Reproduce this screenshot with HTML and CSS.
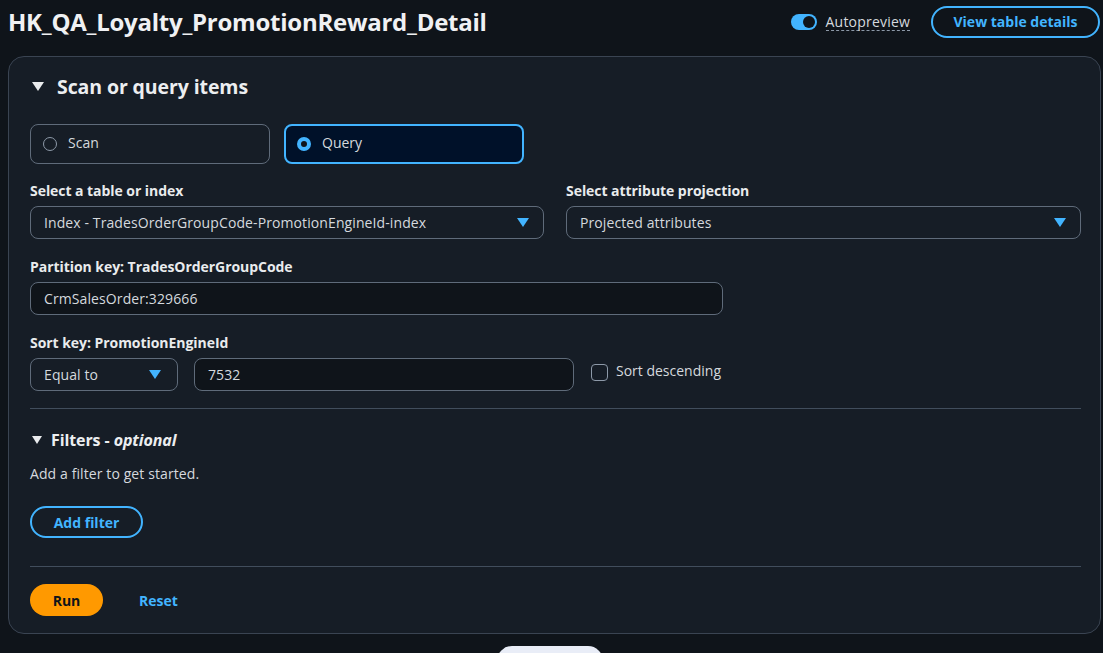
FILE: index.html
```html
<!DOCTYPE html>
<html lang="en">
<head>
<meta charset="utf-8">
<title>HK_QA_Loyalty_PromotionReward_Detail</title>
<link rel="stylesheet" href="styles.css">
</head>
<body>
<header class="topbar">
  <h1 class="title">HK_QA_Loyalty_PromotionReward_Detail</h1>
  <div class="actions">
    <label class="toggle">
      <span class="track"><span class="knob"></span></span>
      <span class="toggle-label">Autopreview</span>
    </label>
    <button class="btn-outline btn-view">View table details</button>
  </div>
</header>

<section class="panel">
  <div class="panel-head">
    <span class="caret"></span>
    <h2 class="panel-title">Scan or query items</h2>
  </div>

  <div class="tiles">
    <div class="tile">
      <span class="radio"></span><span class="tile-text">Scan</span>
    </div>
    <div class="tile tile-active">
      <span class="radio radio-on"></span><span class="tile-text">Query</span>
    </div>
  </div>

  <div class="two-col">
    <div class="field">
      <div class="label">Select a table or index</div>
      <div class="select"><span>Index - TradesOrderGroupCode-PromotionEngineId-index</span><span class="arrow"></span></div>
    </div>
    <div class="field">
      <div class="label">Select attribute projection</div>
      <div class="select"><span>Projected attributes</span><span class="arrow"></span></div>
    </div>
  </div>

  <div class="field field-pk">
    <div class="label">Partition key: TradesOrderGroupCode</div>
    <div class="input input-pk">CrmSalesOrder:329666</div>
  </div>

  <div class="field field-sk">
    <div class="label">Sort key: PromotionEngineId</div>
    <div class="sk-row">
      <div class="select select-op"><span>Equal to</span><span class="arrow"></span></div>
      <div class="input input-sk">7532</div>
      <label class="check"><span class="box"></span><span>Sort descending</span></label>
    </div>
  </div>

  <hr class="divider divider-1">

  <div class="filters-head">
    <span class="caret caret-sm"></span>
    <h3 class="filters-title">Filters - <em>optional</em></h3>
  </div>
  <p class="hint">Add a filter to get started.</p>
  <button class="btn-outline btn-filter">Add filter</button>

  <hr class="divider divider-2">

  <div class="footer-row">
    <button class="btn-run">Run</button>
    <button class="btn-link">Reset</button>
  </div>
</section>

<div class="floating-pill"></div>
</body>
</html>
```

FILE: styles.css
```css
* { box-sizing: border-box; }
html, body { margin: 0; padding: 0; }
body {
  background: #0f141a;
  color: #d5d9de;
  font-family: "Open Sans", "Noto Sans", Arial, sans-serif;
  font-size: 14px;
  width: 1103px;
  height: 653px;
  overflow: hidden;
  position: relative;
}
button { font-family: inherit; cursor: pointer; }

.topbar {
  display: flex;
  align-items: center;
  justify-content: space-between;
  height: 43px;
  padding: 0 3px 0 8px;
}
.title {
  margin: 0;
  font-size: 24px;
  font-weight: 700;
  color: #f0f1f3;
  letter-spacing: -0.25px;
}
.actions { display: flex; align-items: center; gap: 21px; }
.toggle { display: flex; align-items: center; gap: 9px; }
.track {
  width: 26px; height: 16px; border-radius: 8px;
  background: #42b4ff; position: relative; display: inline-block;
}
.knob {
  position: absolute; right: 2px; top: 2px;
  width: 12px; height: 12px; border-radius: 50%; background: #0f141a;
}
.toggle-label {
  color: #d5d9de;
  border-bottom: 1px dashed #8d99a8;
  line-height: 17px;
  letter-spacing: 0.2px;
}
.btn-outline {
  background: transparent;
  border: 2px solid #42b4ff;
  color: #42b4ff;
  font-weight: 700;
  font-size: 14px;
  border-radius: 16px;
}
.btn-view { width: 169px; height: 32px; padding: 0; }

.panel {
  margin: 13px 0 0 8px;
  width: 1093px;
  height: 578px;
  background: #161d26;
  border: 1px solid #3a4452;
  border-radius: 16px;
  padding: 0 20px 0 21px;
}
.panel-head { display: flex; align-items: center; height: 58px; }
.caret {
  width: 0; height: 0;
  border-left: 6px solid transparent;
  border-right: 6px solid transparent;
  border-top: 9px solid #e9ebed;
  margin: 0 13px 0 2px;
}
.caret-sm {
  border-left-width: 5.5px; border-right-width: 5.5px; border-top-width: 8px;
  margin-right: 9px;
}
.panel-title { margin: 0; font-size: 19.5px; font-weight: 700; color: #eceef0; letter-spacing: -0.1px; }

.tiles { display: flex; gap: 14px; margin-top: 9px; }
.tile {
  width: 240px; height: 40px;
  border: 1px solid #5f6b7a;
  border-radius: 8px;
  display: flex; align-items: center;
  padding-left: 12px;
  padding-bottom: 3px;
  gap: 11px;
}
.tile-active {
  border: 2px solid #42b4ff;
  background: #001129;
  padding-left: 11px;
}
.radio {
  width: 14px; height: 14px; border-radius: 50%;
  border: 1px solid #8d99a8;
  margin-top: 3px;
}
.radio-on { border: 4px solid #42b4ff; background: #0f141a; }
.tile-text { color: #d5d9de; font-size: 14px; }

.two-col { display: grid; grid-template-columns: 514px 515px; gap: 22px; margin-top: 17px; }
.field { display: flex; flex-direction: column; }
.label {
  font-weight: 700; font-size: 14px; color: #e9ebed;
  height: 20px; line-height: 20px; margin-bottom: 5px; letter-spacing: -0.05px;
}
.select, .input {
  height: 33px;
  border: 1px solid #5f6b7a;
  border-radius: 8px;
  background: #0f141a;
  display: flex; align-items: center;
  padding: 0 14px 0 13px;
  color: #d5d9de;
  font-size: 14px;
  letter-spacing: 0.1px;
  justify-content: space-between;
}
.select { background: transparent; }
.input { background: #0f141a; justify-content: flex-start; }
.arrow {
  width: 0; height: 0;
  border-left: 6px solid transparent;
  border-right: 6px solid transparent;
  border-top: 9px solid #42b4ff;
}
.field-pk { margin-top: 18px; }
.input-pk { width: 693px; }
.field-sk { margin-top: 18px; }
.sk-row { display: flex; align-items: center; gap: 16px; }
.select-op { width: 148px; padding-right: 16px; }
.input-sk { width: 380px; }
.check { display: flex; align-items: center; gap: 8px; color: #d5d9de; margin-top: -8px; margin-left: 1px; }
.box {
  width: 17px; height: 17px; border-radius: 4px;
  border: 1px solid #8d99a8; margin-top: 4px;
}

.divider {
  border: 0; border-top: 1px solid #414d5c;
  margin: 0; width: 1051px;
}
.divider-1 { margin-top: 17px; }
.filters-head { display: flex; align-items: center; margin-top: 19px; height: 24px; }
.filters-title { margin: 0; font-size: 16px; font-weight: 700; color: #eceef0; letter-spacing: -0.1px; }
.filters-title em { font-style: italic; }
.hint { margin: 12px 0 0; color: #d5d9de; line-height: 20px; letter-spacing: 0.1px; }
.btn-filter { margin-top: 22px; width: 113px; height: 32px; padding: 0; display: block; }
.divider-2 { margin-top: 28px; }

.footer-row { display: flex; align-items: center; gap: 36px; margin-top: 17px; }
.btn-run {
  width: 73px; height: 32px; border: 0; border-radius: 16px;
  background: #ff9900; color: #0f141a; font-weight: 700; font-size: 14px; padding: 0;
}
.btn-link {
  background: none; border: 0; padding: 0;
  color: #42b4ff; font-weight: 700; font-size: 14px;
}

.floating-pill {
  position: absolute;
  left: 497px; top: 646px;
  width: 106px; height: 30px;
  background: #e9edf7;
  border-radius: 16px;
}
```
